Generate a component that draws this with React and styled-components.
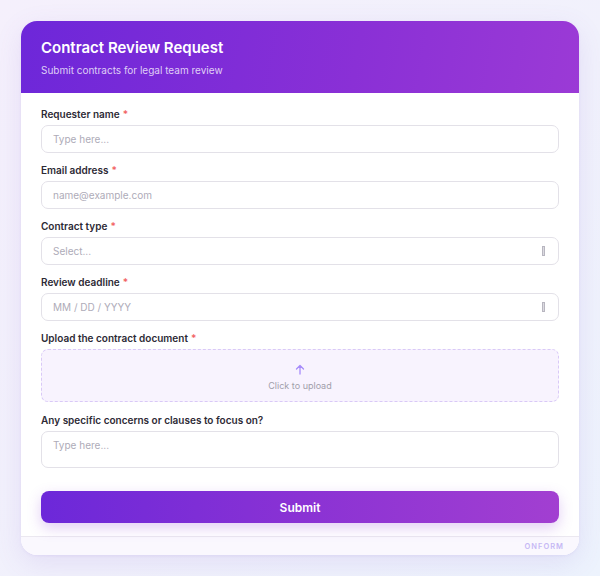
import React from "react";
import styled, { createGlobalStyle } from "styled-components";

//global
const GlobalStyle = createGlobalStyle`
    html, body {
        margin: 0;
        padding: 0;
    }
    body {
        width: 600px;
        height: 576px;
        background: linear-gradient(135deg, #f5f0fc 0%, #f1f1fc 55%, #edf3fd 100%);
        font-family: Inter, "Noto Sans", sans-serif;
        -webkit-font-smoothing: antialiased;
    }
    * {
        box-sizing: border-box;
    }
`

//styled
const Page = styled.div`
    padding: 21px;
`
const Card = styled.div`
    width: 558px;
    background: #ffffff;
    border-radius: 16px;
    overflow: hidden;
    box-shadow: 0 8px 28px rgba(120, 80, 200, 0.12), 0 1px 3px rgba(120, 80, 200, 0.08);
`
const Header = styled.div`
    height: 72px;
    padding: 17px 20px 0 20px;
    background: linear-gradient(100deg, #6d27d9 0%, #8a30d6 60%, #9b3ad6 100%);
`
const Title = styled.h1`
    margin: 0;
    font-size: 15px;
    line-height: 19px;
    font-weight: 600;
    color: #ffffff;
`
const Subtitle = styled.p`
    margin: 6px 0 0 0;
    font-size: 10px;
    line-height: 14px;
    color: rgba(255, 255, 255, 0.78);
`
const Body = styled.div`
    padding: 14px 20px 13px 20px;
    display: flex;
    flex-direction: column;
`
const Field = styled.div`
    display: flex;
    flex-direction: column;
    gap: 4px;
    margin-bottom: ${props => props.$mb || 10}px;
`
const Label = styled.label`
    font-size: 10px;
    line-height: 14px;
    font-weight: 600;
    color: #2d2a35;
`
const Star = styled.span`
    color: #f26464;
    margin-left: 3px;
`
const InputBox = styled.div`
    height: ${props => props.$h || 28}px;
    border: 1.5px solid #e3e1e8;
    border-radius: 7px;
    display: flex;
    align-items: ${props => props.$top ? "flex-start" : "center"};
    justify-content: space-between;
    padding: ${props => props.$top ? "7px 12px 0 11px" : "0 12px 0 11px"};
    background: #ffffff;
`
const Placeholder = styled.span`
    font-size: 10px;
    color: #aeabb8;
`
const Handle = styled.span`
    width: 3px;
    height: 10px;
    border: 1px solid #b8b6c0;
    background: #dcdbe1;
    margin-right: 1px;
`
const Upload = styled.div`
    height: 53px;
    border: 1.5px dashed #d9c9f7;
    border-radius: 7px;
    background: #f8f3fe;
    display: flex;
    flex-direction: column;
    align-items: center;
    justify-content: center;
    gap: 5px;
    padding-top: 3px;
`
const UploadText = styled.span`
    font-size: 9px;
    color: #a19eaa;
`
const SubmitButton = styled.button`
    margin-top: 14px;
    height: 32px;
    border: none;
    border-radius: 8px;
    background: linear-gradient(90deg, #6c28d9 0%, #8a32d4 50%, #a23fd1 100%);
    color: #ffffff;
    font-family: Inter, "Noto Sans", sans-serif;
    font-size: 12px;
    font-weight: 600;
    box-shadow: 0 5px 14px rgba(140, 60, 215, 0.25);
`
const Footer = styled.div`
    height: 19px;
    border-top: 1px solid #ebe8f0;
    background: #faf8fe;
    display: flex;
    align-items: center;
    justify-content: flex-end;
    padding-right: 15px;
`
const Brand = styled.span`
    font-size: 7.5px;
    font-weight: 600;
    letter-spacing: 1px;
    color: #c6b8f5;
`

function Arrow() {
    return (
        <svg width="10" height="11" viewBox="0 0 10 11" fill="none">
            <path d="M5 10V1.5M1.5 5L5 1.5L8.5 5" stroke="#a78bfa" strokeWidth="1.3" strokeLinecap="round" strokeLinejoin="round" />
        </svg>
    )
}

function App() {

    return (
        <Page>
            <GlobalStyle />
            <Card>
                <Header>
                    <Title>Contract Review Request</Title>
                    <Subtitle>Submit contracts for legal team review</Subtitle>
                </Header>
                <Body>
                    <Field>
                        <Label>Requester name<Star>*</Star></Label>
                        <InputBox><Placeholder>Type here...</Placeholder></InputBox>
                    </Field>
                    <Field>
                        <Label>Email address<Star>*</Star></Label>
                        <InputBox><Placeholder>name@example.com</Placeholder></InputBox>
                    </Field>
                    <Field>
                        <Label>Contract type<Star>*</Star></Label>
                        <InputBox><Placeholder>Select...</Placeholder><Handle /></InputBox>
                    </Field>
                    <Field>
                        <Label>Review deadline<Star>*</Star></Label>
                        <InputBox><Placeholder>MM / DD / YYYY</Placeholder><Handle /></InputBox>
                    </Field>
                    <Field $mb={11}>
                        <Label>Upload the contract document<Star>*</Star></Label>
                        <Upload>
                            <Arrow />
                            <UploadText>Click to upload</UploadText>
                        </Upload>
                    </Field>
                    <Field $mb={9}>
                        <Label>Any specific concerns or clauses to focus on?</Label>
                        <InputBox $h={37} $top><Placeholder>Type here...</Placeholder></InputBox>
                    </Field>
                    <SubmitButton>Submit</SubmitButton>
                </Body>
                <Footer>
                    <Brand>ONFORM</Brand>
                </Footer>
            </Card>
        </Page>
    )

}

export default App;
